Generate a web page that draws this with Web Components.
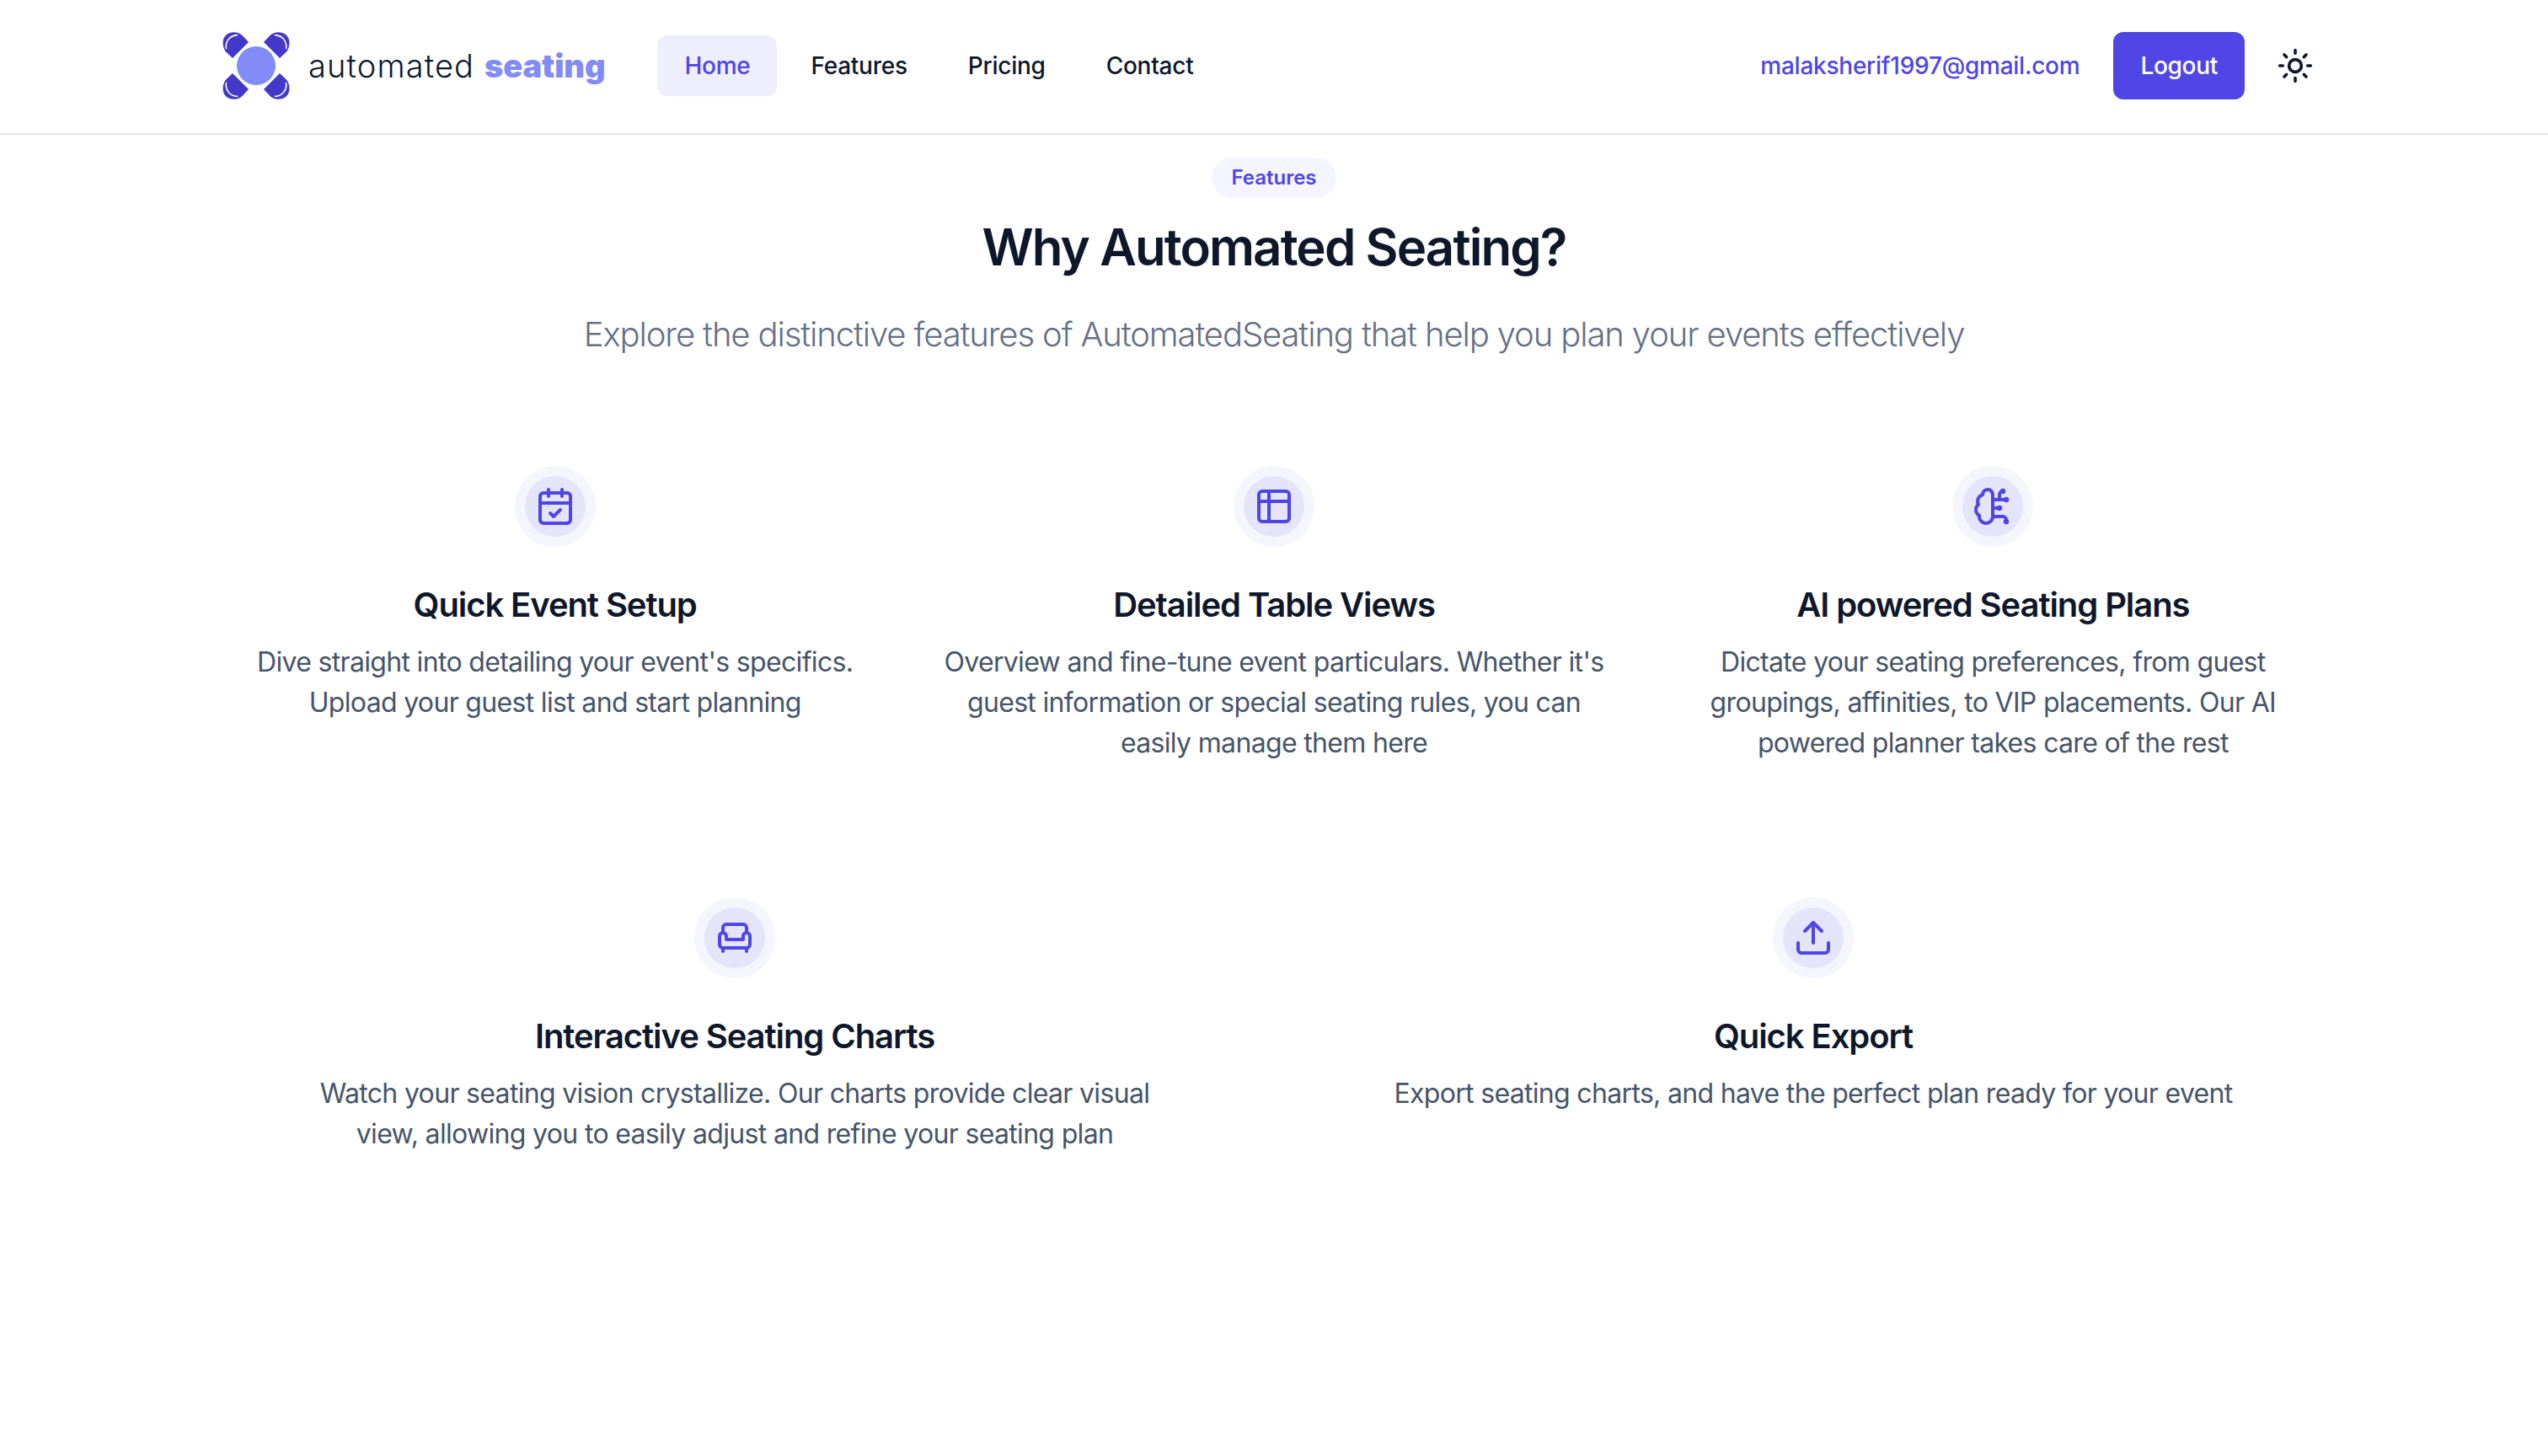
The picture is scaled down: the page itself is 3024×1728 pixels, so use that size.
<!DOCTYPE html>
<html lang="en">
<head>
<meta charset="utf-8">
<title>Automated Seating</title>
<style>
  html, body { margin: 0; background: #fff; }
  body { font-family: "Inter", "Liberation Sans", sans-serif; color: #0f172a; }
</style>
</head>
<body>
<site-nav>
  <site-logo slot="logo"></site-logo>
  <nav-link slot="links" active>Home</nav-link>
  <nav-link slot="links">Features</nav-link>
  <nav-link slot="links">Pricing</nav-link>
  <nav-link slot="links">Contact</nav-link>
  <span slot="email">malaksherif1997@gmail.com</span>
  <span slot="action">Logout</span>
</site-nav>

<features-section>
  <section-head slot="head" badge="Features" title="Why Automated Seating?">Explore the distinctive features of AutomatedSeating that help you plan your events effectively</section-head>

  <feature-item slot="top" icon="calendar" title="Quick Event Setup">Dive straight into detailing your event's specifics. Upload your guest list and start planning</feature-item>
  <feature-item slot="top" icon="table" title="Detailed Table Views">Overview and fine-tune event particulars. Whether it's guest information or special seating rules, you can easily manage them here</feature-item>
  <feature-item slot="top" icon="brain" title="AI powered Seating Plans">Dictate your seating preferences, from guest groupings, affinities, to VIP placements. Our AI powered planner takes care of the rest</feature-item>

  <feature-item slot="bottom" wide icon="armchair" title="Interactive Seating Charts">Watch your seating vision crystallize. Our charts provide clear visual view, allowing you to easily adjust and refine your seating plan</feature-item>
  <feature-item slot="bottom" wide icon="upload" title="Quick Export">Export seating charts, and have the perfect plan ready for your event</feature-item>
</features-section>

<script>
// paths of the line icons, all on a 24 box
const ICONS = {
  calendar: `<rect x="3" y="4" width="18" height="18" rx="2"/><path d="M16 2v4M8 2v4M3 10h18M9 16l2 2 4-4"/>`,
  table: `<rect x="3" y="3" width="18" height="18" rx="2"/><path d="M3 9h18M9 3v18"/>`,
  brain: `<path d="M12 5a3 3 0 1 0-5.997.125 4 4 0 0 0-2.526 5.77 4 4 0 0 0 .556 6.588A4 4 0 1 0 12 18Z"/><path d="M12 13h4M12 18h6a2 2 0 0 1 2 2v1M12 8h8M16 8V5a2 2 0 0 1 2-2"/><circle cx="16" cy="13" r=".6"/><circle cx="18" cy="3" r=".6"/><circle cx="20" cy="21" r=".6"/><circle cx="20" cy="8" r=".6"/>`,
  armchair: `<path d="M19 9V6a2 2 0 0 0-2-2H7a2 2 0 0 0-2 2v3"/><path d="M3 16a2 2 0 0 0 2 2h14a2 2 0 0 0 2-2v-5a2 2 0 0 0-4 0v2H7v-2a2 2 0 0 0-4 0Z"/><path d="M5 18v2M19 18v2"/>`,
  upload: `<path d="M21 15v4a2 2 0 0 1-2 2H5a2 2 0 0 1-2-2v-4"/><path d="M17 8l-5-5-5 5"/><path d="M12 3v12"/>`,
  sun: `<circle cx="12" cy="12" r="4"/><path d="M12 2v2M12 20v2M4.93 4.93l1.41 1.41M17.66 17.66l1.41 1.41M2 12h2M20 12h2M6.34 17.66l-1.41 1.41M19.07 4.93l-1.41 1.41"/>`
}

function iconSvg(name, size, color){
  return `<svg width="${size}" height="${size}" viewBox="0 0 24 24" fill="none" stroke="${color}" stroke-width="2" stroke-linecap="round" stroke-linejoin="round">${ICONS[name]}</svg>`
}

class SiteLogo extends HTMLElement{
  constructor(){
    super()
    this.attachShadow({mode: "open"})
    // one chair, the other three are mirrored around the table
    const chair = `<path d="M12 31 3.6 23C-1.5 15 .4 6 5 3 10 -1 18 -.6 23 3.6L31 12Z" fill="#4338ca"/>
      <path d="M4.4 19.5C3.4 12 8 4 17.5 3.6" fill="none" stroke="#fff" stroke-width="1.6" stroke-linecap="round"/>`
    this.shadowRoot.innerHTML = `<style>
      :host{ display:flex; align-items:center; gap:22px; }
      svg{ display:block; flex:none; }
      .name{ font-family:"Inter","Liberation Sans",sans-serif; font-size:38px; line-height:44px; font-weight:300; color:#0f172a; letter-spacing:1.15px; white-space:nowrap; }
      .name b{ font-weight:900; color:#818cf8; letter-spacing:-.1px; }
    </style>
    <svg width="80" height="80" viewBox="0 0 80 80">
      <g>${chair}</g>
      <g transform="translate(80 0) scale(-1 1)">${chair}</g>
      <g transform="translate(0 80) scale(1 -1)">${chair}</g>
      <g transform="translate(80 80) scale(-1 -1)">${chair}</g>
      <circle cx="40" cy="40" r="23" fill="#818cf8"/>
    </svg>
    <span class="name">automated <b>seating</b></span>`
  }
}

class NavLink extends HTMLElement{
  constructor(){
    super()
    this.attachShadow({mode: "open"})
    this.shadowRoot.innerHTML = `<style>
      :host{ display:block; padding:16px 32px; border-radius:12px; font-size:28px; line-height:40px; font-weight:500; color:#0f172a; letter-spacing:-.25px; }
      :host([active]){ background:#eeeefc; color:#4f46e5; }
    </style><slot></slot>`
  }
}

class SiteNav extends HTMLElement{
  constructor(){
    super()
    this.attachShadow({mode: "open"})
    this.shadowRoot.innerHTML = `<style>
      :host{ display:block; border-bottom:2px solid #e5e7eb; font-family:"Inter","Liberation Sans",sans-serif; }
      .bar{ box-sizing:border-box; max-width:2560px; height:158px; margin:0 auto; padding:0 32px 2px; display:flex; align-items:center; justify-content:space-between; }
      .left, .right, .links{ display:flex; align-items:center; }
      .left{ gap:62px; }
      .links{ gap:8px; }
      .email{ font-size:28px; line-height:40px; font-weight:500; color:#4f46e5; margin-right:40px; letter-spacing:-.24px; }
      .logout{ box-sizing:border-box; height:80px; padding:0 32px; display:flex; align-items:center; border-radius:12px; background:#4f46e5; color:#fff; font-size:28px; font-weight:500; margin-right:38px; letter-spacing:-.3px; }
      .theme{ display:block; margin-right:14px; }
      svg{ display:block; }
    </style>
    <div class="bar">
      <div class="left">
        <slot name="logo"></slot>
        <div class="links"><slot name="links"></slot></div>
      </div>
      <div class="right">
        <div class="email"><slot name="email"></slot></div>
        <div class="logout"><slot name="action"></slot></div>
        <div class="theme">${iconSvg("sun", 44, "#0f172a")}</div>
      </div>
    </div>`
  }
}

class SectionHead extends HTMLElement{
  constructor(){
    super()
    this.attachShadow({mode: "open"})
  }
  connectedCallback(){
    this.shadowRoot.innerHTML = `<style>
      :host{ display:flex; flex-direction:column; align-items:center; text-align:center; }
      .badge{ padding:8px 23px; border-radius:24px; background:#f5f5ff; color:#4f46e5; font-size:24px; line-height:32px; font-weight:600; }
      h2{ margin:22px 0 40px; font-size:60px; line-height:72px; font-weight:600; color:#0f172a; letter-spacing:-.032em; }
      p{ margin:0; font-size:40px; line-height:56px; font-weight:300; color:#667085; letter-spacing:-.028em; }
    </style>
    <span class="badge">${this.getAttribute("badge")}</span>
    <h2>${this.getAttribute("title")}</h2>
    <p><slot></slot></p>`
  }
}

class FeatureItem extends HTMLElement{
  constructor(){
    super()
    this.attachShadow({mode: "open"})
  }
  connectedCallback(){
    this.shadowRoot.innerHTML = `<style>
      :host{ box-sizing:border-box; display:flex; flex-direction:column; align-items:center; text-align:center; padding:0 32px; }
      .outer{ width:96px; height:96px; border-radius:50%; background:#f5f5fe; display:flex; align-items:center; justify-content:center; }
      .inner{ width:72px; height:72px; border-radius:50%; background:#e4e4fa; display:flex; align-items:center; justify-content:center; }
      svg{ display:block; }
      h3{ margin:41px 0 16px; font-size:40px; line-height:56px; font-weight:600; color:#0f172a; letter-spacing:-.027em; }
      p{ margin:0; font-size:32px; line-height:48px; color:#475569; letter-spacing:-.021em; }
      :host([wide]) p{ max-width:1024px; }
    </style>
    <div class="outer"><div class="inner">${iconSvg(this.getAttribute("icon"), 48, "#4f46e5")}</div></div>
    <h3>${this.getAttribute("title")}</h3>
    <p><slot></slot></p>`
  }
}

class FeaturesSection extends HTMLElement{
  constructor(){
    super()
    this.attachShadow({mode: "open"})
    this.shadowRoot.innerHTML = `<style>
      :host{ display:block; max-width:2560px; margin:0 auto; padding-top:27px; }
      .grid{ display:grid; }
      .top{ grid-template-columns:repeat(3, 1fr); margin-top:128px; }
      .bottom{ grid-template-columns:repeat(2, 1fr); margin-top:159px; }
    </style>
    <slot name="head"></slot>
    <div class="grid top"><slot name="top"></slot></div>
    <div class="grid bottom"><slot name="bottom"></slot></div>`
  }
}

customElements.define("site-logo", SiteLogo)
customElements.define("nav-link", NavLink)
customElements.define("site-nav", SiteNav)
customElements.define("section-head", SectionHead)
customElements.define("feature-item", FeatureItem)
customElements.define("features-section", FeaturesSection)
</script>
</body>
</html>
